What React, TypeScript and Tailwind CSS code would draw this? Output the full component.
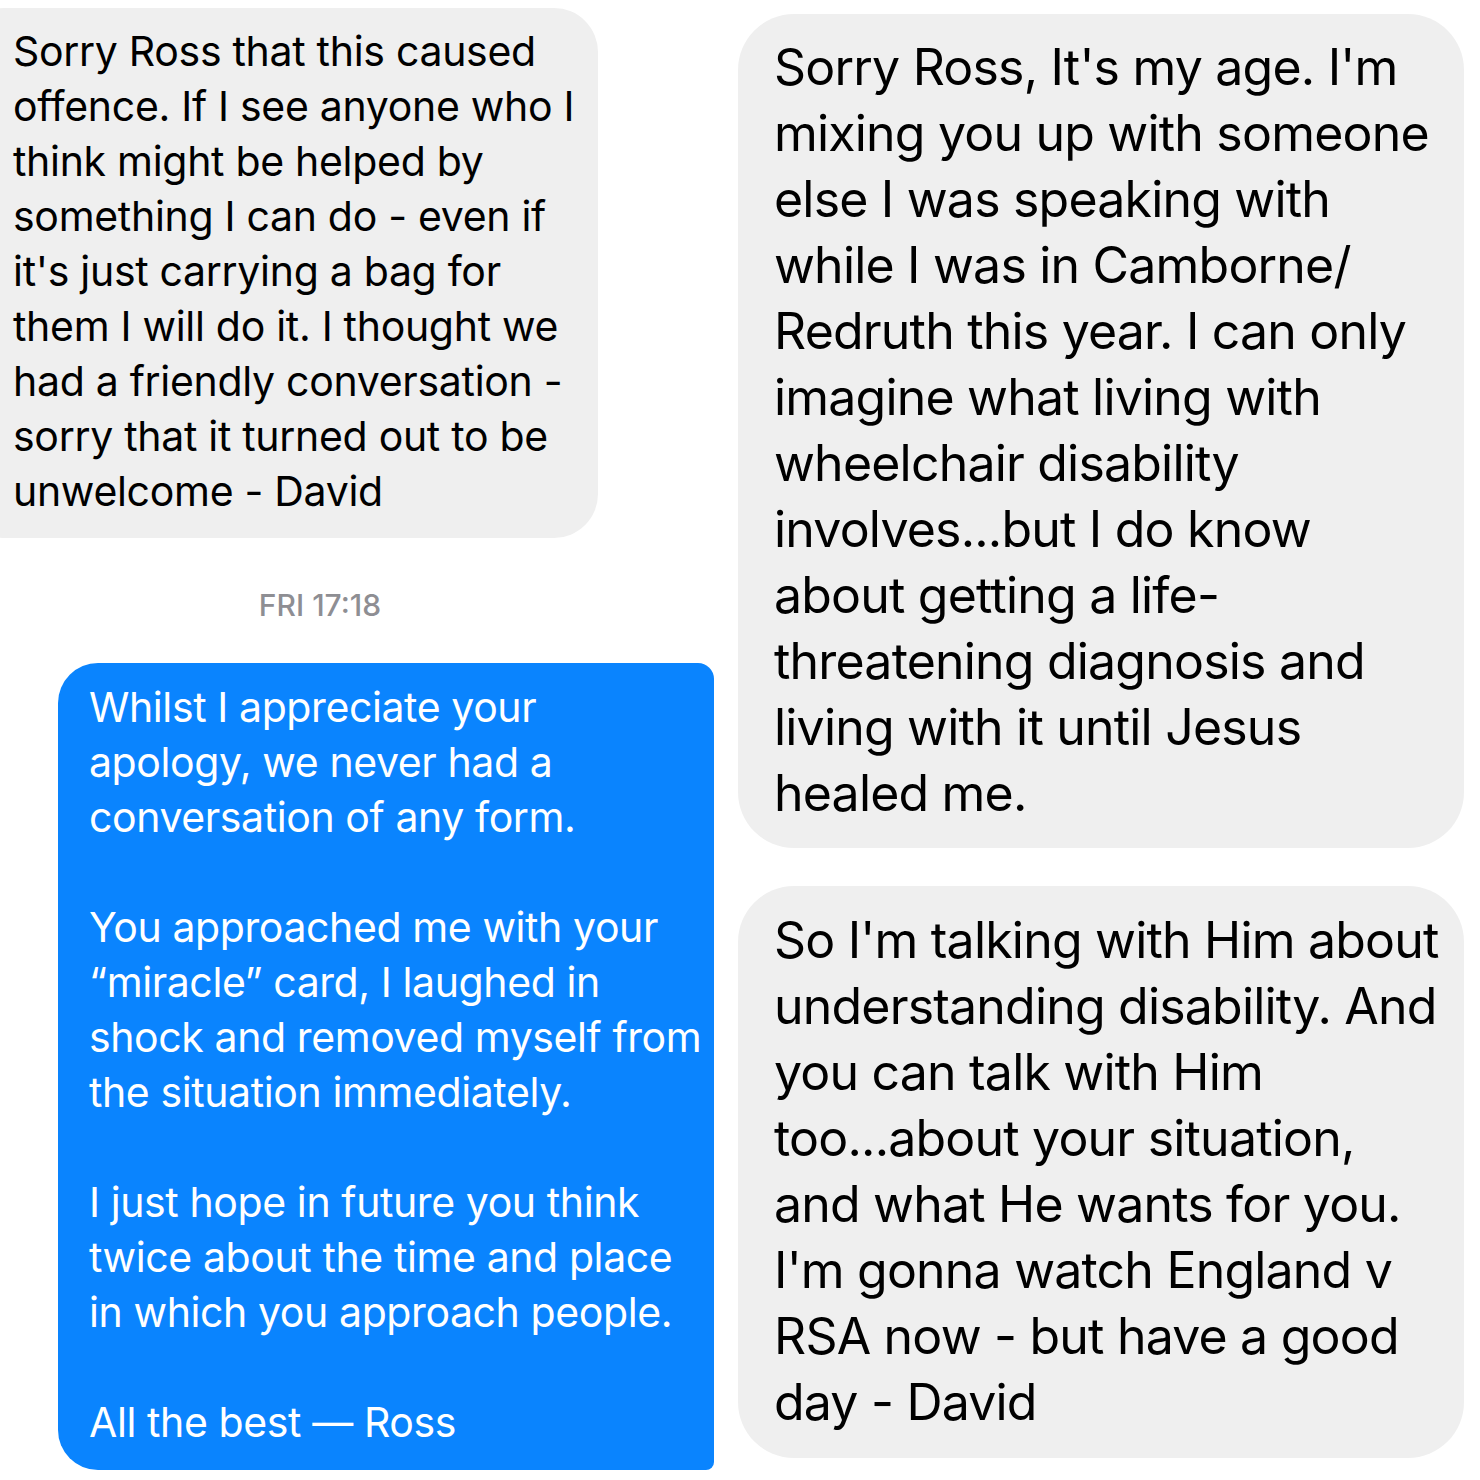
const leftLines = [
  "Sorry Ross that this caused",
  "offence. If I see anyone who I",
  "think might be helped by",
  "something I can do - even if",
  "it's just carrying a bag for",
  "them I will do it. I thought we",
  "had a friendly conversation -",
  "sorry that it turned out to be",
  "unwelcome - David",
];

const blueLines = [
  "Whilst I appreciate your",
  "apology, we never had a",
  "conversation of any form.",
  "",
  "You approached me with your",
  "\u201Cmiracle\u201D card, I laughed in",
  "shock and removed myself from",
  "the situation immediately.",
  "",
  "I just hope in future you think",
  "twice about the time and place",
  "in which you approach people.",
  "",
  "All the best \u2014 Ross",
];

const rightTop = [
  "Sorry Ross, It's my age. I'm",
  "mixing you up with someone",
  "else I was speaking with",
  "while I was in Camborne/",
  "Redruth this year. I can only",
  "imagine what living with",
  "wheelchair disability",
  "involves...but I do know",
  "about getting a life-",
  "threatening diagnosis and",
  "living with it until Jesus",
  "healed me.",
];

const rightBottom = [
  "So I'm talking with Him about",
  "understanding disability. And",
  "you can talk with Him",
  "too...about your situation,",
  "and what He wants for you.",
  "I'm gonna watch England v",
  "RSA now - but have a good",
  "day - David",
];

const Lines = ({ lines, className }: { lines: string[]; className: string }) => (
  <div className={className}>
    {lines.map((l, i) => (
      <div key={i} className="whitespace-nowrap">
        {l || "\u00A0"}
      </div>
    ))}
  </div>
);

const App: React.FC = () => {
  return (
    <div className="w-[1480px] h-[1480px] bg-white flex overflow-hidden font-['Inter','Liberation_Sans',sans-serif]">
      <div className="w-[738px] shrink-0 flex flex-col">
        <div className="mt-[8px] ml-[-40px] w-[638px] h-[530px] bg-[#efefef] rounded-[44px] pl-[53px] pt-[16px]">
          <Lines lines={leftLines} className="text-[41px] leading-[55px] tracking-[-0.3px] text-black" />
        </div>
        <div className="w-[640px] mt-[49px] text-center text-[#8e8e93] text-[30px] leading-[36px] font-medium">
          FRI 17:18
        </div>
        <div className="mt-[40px] ml-[58px] w-[656px] h-[807px] bg-[#0a84fe] rounded-l-[40px] rounded-tr-[16px] rounded-br-[8px] pl-[31px] pt-[17px]">
          <Lines lines={blueLines} className="text-[41px] leading-[55px] tracking-[-0.4px] text-white" />
        </div>
      </div>
      <div className="flex flex-col">
        <div className="mt-[14px] w-[726px] h-[834px] bg-[#efefef] rounded-[56px] pl-[36px] pt-[20px]">
          <Lines lines={rightTop} className="text-[50px] leading-[66px] tracking-[-0.8px] text-black" />
        </div>
        <div className="mt-[38px] w-[726px] h-[572px] bg-[#efefef] rounded-[56px] pl-[36px] pt-[21px]">
          <Lines lines={rightBottom} className="text-[50px] leading-[66px] tracking-[-0.8px] text-black" />
        </div>
      </div>
    </div>
  );
};

export default App;
